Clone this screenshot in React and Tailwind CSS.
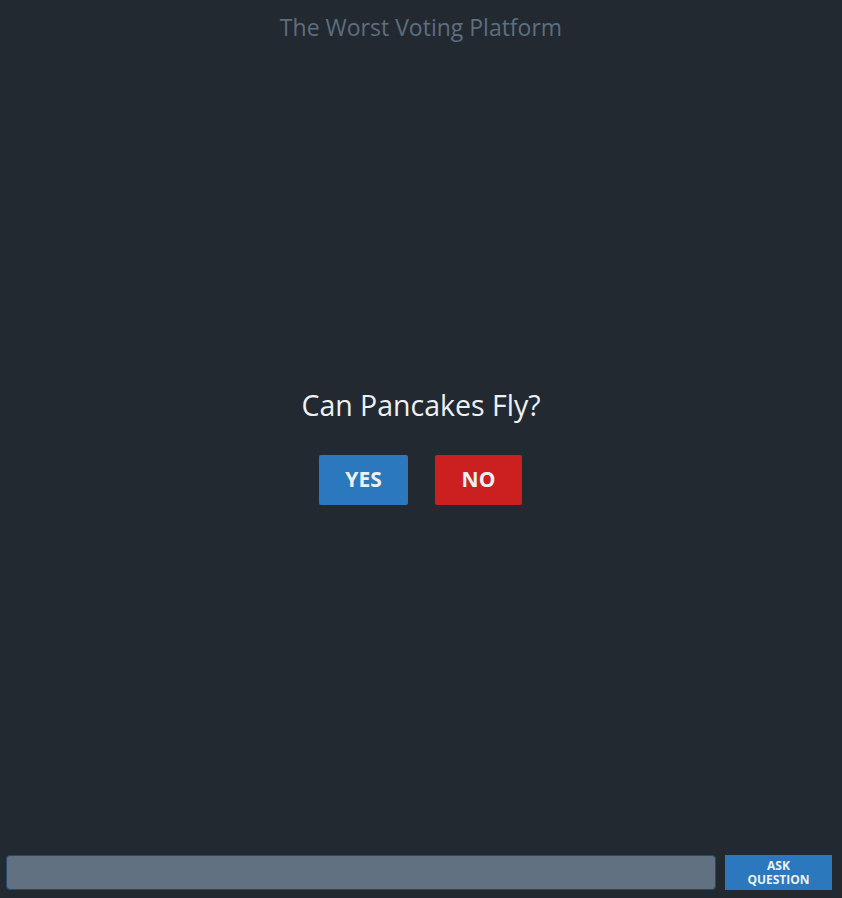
export default function App() {
  return (
    <div className="h-screen w-full bg-[#232930] flex flex-col font-['Open_Sans','Noto_Sans',sans-serif]">
      {/* HEADER */}
      <header className="h-[54px] flex items-center justify-center">
        <h1 className="text-[23px] text-[#5d6e7f]">The Worst Voting Platform</h1>
      </header>

      {/* QUESTION + VOTE BUTTONS */}
      <main className="flex-1 flex flex-col items-center justify-center pb-[4px]">
        <h2 className="text-[28.5px] text-[#eef1f4] leading-none mb-[35px]">Can Pancakes Fly?</h2>
        <div className="flex gap-[27px] pr-[1px]">
          <button className="w-[89px] h-[50px] bg-[#2b78be] text-[#eef1f4] text-[21px] font-bold rounded-[2px]">YES</button>
          <button className="w-[87px] h-[50px] bg-[#cc1f1f] text-[#eef1f4] text-[21px] font-bold rounded-[2px]">NO</button>
        </div>
      </main>

      {/* ASK BAR */}
      <footer className="flex items-center pt-[9px] pb-[8px] pl-[6px] pr-[10px] gap-[9px]">
        <input type="text" className="flex-1 h-[35px] bg-[#627181] rounded-[4px] border border-[#1f4a73] outline-none px-3 text-white" />
        <button className="w-[107px] h-[35px] bg-[#2b78be] text-[#eef1f4] text-[12px] font-bold leading-[14px] uppercase flex flex-col items-center justify-center">
          <span>Ask</span>
          <span>Question</span>
        </button>
      </footer>
    </div>
  )
}
